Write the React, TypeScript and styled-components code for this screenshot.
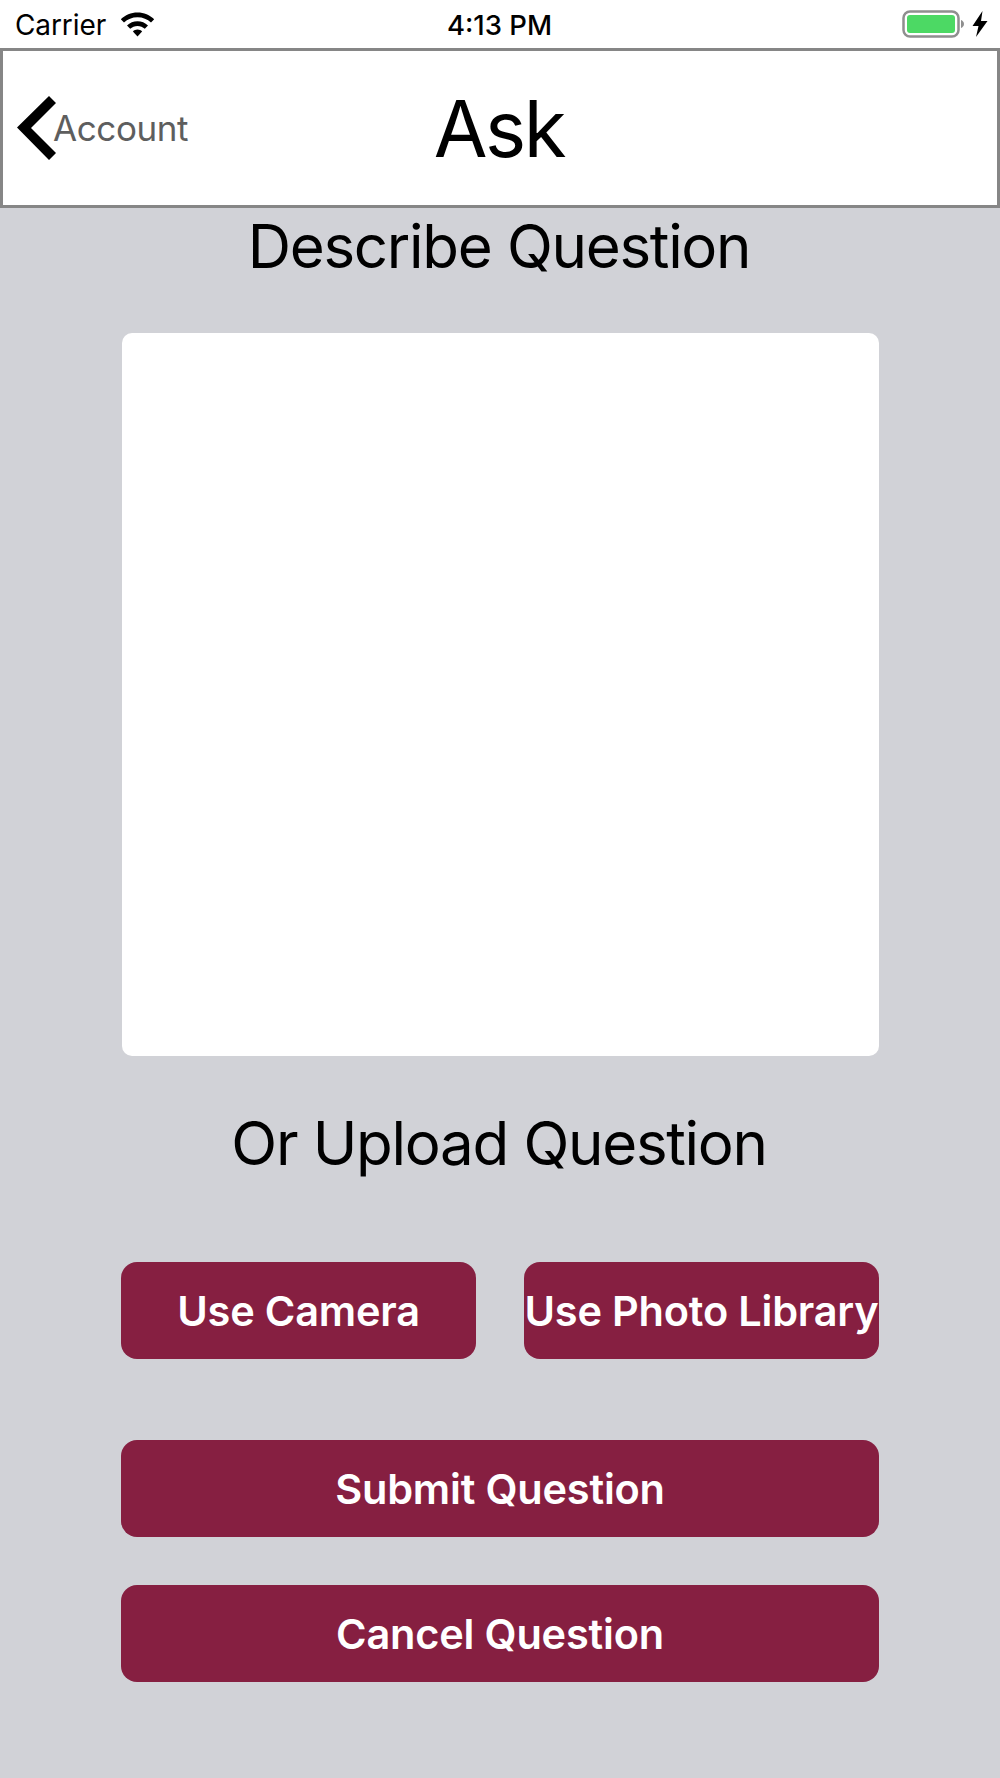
import React from "react";
import styled, { createGlobalStyle } from "styled-components";

const Global = createGlobalStyle`
  html, body { margin: 0; padding: 0; background: #d1d2d7; }
  body { font-family: Inter, "Liberation Sans", sans-serif; }
`;

const Page = styled.div`
  width: 1000px;
  height: 1778px;
  display: flex;
  flex-direction: column;
  background: #d1d2d7;
  overflow: hidden;
`;

const StatusBar = styled.div`
  height: 48px;
  flex: none;
  display: grid;
  grid-template-columns: 1fr auto 1fr;
  align-items: center;
  padding: 0 12px 0 15px;
  background: #fff;
  color: #000;
  box-sizing: border-box;
`;

const StatusLeft = styled.div`
  display: flex;
  align-items: center;
  gap: 14px;
`;

const StatusRight = styled.div`
  display: flex;
  align-items: center;
  justify-content: flex-end;
  gap: 7px;
`;

const Carrier = styled.span`
  font-size: 28px;
  letter-spacing: -0.1px;
  padding-top: 2px;
`;

const Clock = styled.span`
  margin-left: -4px;
  font-size: 27.5px;
  font-weight: 500;
  padding-top: 2px;
`;

const Header = styled.header`
  height: 160px;
  flex: none;
  box-sizing: border-box;
  border: 3px solid #868686;
  background: #fff;
  display: grid;
  grid-template-columns: 1fr auto 1fr;
  align-items: center;
  padding: 0 14px;
`;

const BackLink = styled.div`
  display: flex;
  align-items: center;
`;

const BackLabel = styled.span`
  margin-left: -3px;
  font-size: 35px;
  color: #5e5e5e;
  letter-spacing: -0.4px;
`;

const Title = styled.h1`
  margin: 0 0 0 -2px;
  font-size: 78px;
  font-weight: 400;
  letter-spacing: -2.4px;
  color: #000;
`;

const Content = styled.main`
  display: flex;
  flex-direction: column;
  align-items: center;
`;

const Heading = styled.h2<{ $top: number }>`
  margin: ${(p) => p.$top}px 0 0 -2px;
  height: 70px;
  line-height: 70px;
  font-size: 60px;
  font-weight: 400;
  letter-spacing: -1.3px;
  color: #000;
`;

const TextBox = styled.div`
  width: 757px;
  height: 723px;
  margin-top: 52px;
  background: #fff;
  border-radius: 10px;
`;

const ActionStack = styled.div`
  width: 758px;
  display: flex;
  flex-direction: column;
  margin-top: 84px;
`;

const ButtonRow = styled.div`
  display: flex;
  justify-content: space-between;
  margin-bottom: 81px;
`;

const Button = styled.button<{ $half?: boolean }>`
  width: ${(p) => (p.$half ? "355px" : "100%")};
  height: 97px;
  margin-bottom: ${(p) => (p.$half ? 0 : 48)}px;
  padding: 0;
  border: 0;
  border-radius: 16px;
  background: #861f41;
  color: #fff;
  font-family: Inter, "Liberation Sans", sans-serif;
  font-size: 41.5px;
  font-weight: 600;
  white-space: nowrap;
  letter-spacing: -0.2px;
`;

const WifiIcon = () => (
  <svg width="35" height="25" viewBox="0 0 35 25" aria-hidden="true">
    <path d="M17.5 0.5C11 0.5 5.2 3 0.8 7.2L4 10.6C7.5 7.2 12.2 5.2 17.5 5.2S27.5 7.2 31 10.6L34.2 7.2C29.8 3 24 0.5 17.5 0.5Z" fill="#000" />
    <path d="M17.5 9.2C13.5 9.2 9.8 10.8 7 13.4L10.2 16.8C12.1 15 14.7 13.9 17.5 13.9S22.9 15 24.8 16.8L28 13.4C25.2 10.8 21.5 9.2 17.5 9.2Z" fill="#000" />
    <path d="M17.5 17.6C15.7 17.6 14.1 18.3 12.9 19.4L17.5 24.4L22.1 19.4C20.9 18.3 19.3 17.6 17.5 17.6Z" fill="#000" />
  </svg>
);

const BatteryIcon = () => (
  <svg width="63" height="28" viewBox="0 0 63 28" aria-hidden="true">
    <rect x="1.5" y="1.5" width="55" height="25" rx="6.5" fill="none" stroke="#8f8f8f" strokeWidth="2.5" />
    <rect x="5" y="5" width="48" height="18" rx="3" fill="#4cd964" />
    <path d="M59 10C60.5 10.6 62 12 62 14S60.5 17.4 59 18Z" fill="#8f8f8f" />
  </svg>
);

const BoltIcon = () => (
  <svg width="16" height="26" viewBox="0 0 16 26" aria-hidden="true">
    <path d="M10.5 0L0.5 15H6.5L4 26L15.5 10H9Z" fill="#000" />
  </svg>
);

const BackChevron = () => (
  <svg width="39" height="64" viewBox="0 0 39 64" aria-hidden="true">
    <polygon points="0,31.5 32,0 39,7 14,32 39,57 32,64" fill="#000" />
  </svg>
);

export default function App() {
  return (
    <Page>
      <Global />
      <StatusBar>
        <StatusLeft>
          <Carrier>Carrier</Carrier>
          <WifiIcon />
        </StatusLeft>
        <Clock>4:13 PM</Clock>
        <StatusRight>
          <BatteryIcon />
          <BoltIcon />
        </StatusRight>
      </StatusBar>
      <Header>
        <BackLink>
          <BackChevron />
          <BackLabel>Account</BackLabel>
        </BackLink>
        <Title>Ask</Title>
      </Header>
      <Content>
        <Heading $top={3}>Describe Question</Heading>
        <TextBox />
        <Heading $top={52}>Or Upload Question</Heading>
        <ActionStack>
          <ButtonRow>
            <Button $half>Use Camera</Button>
            <Button $half>Use Photo Library</Button>
          </ButtonRow>
          <Button>Submit Question</Button>
          <Button>Cancel Question</Button>
        </ActionStack>
      </Content>
    </Page>
  );
}
